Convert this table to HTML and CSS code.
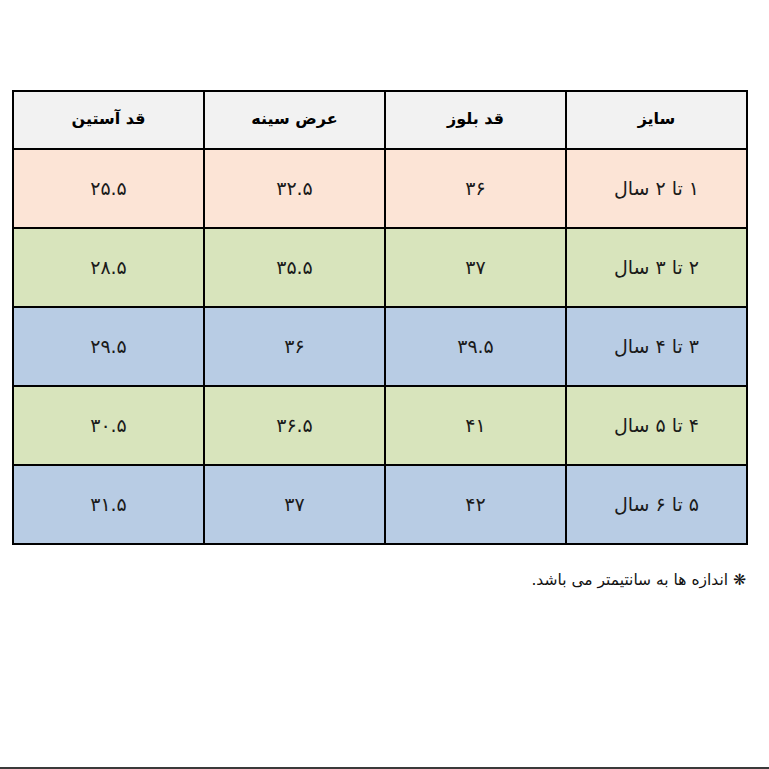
FILE: index.html
```html
<!DOCTYPE html>
<html lang="fa" dir="rtl">
<head>
<meta charset="utf-8">
<title>جدول سایز</title>
<link rel="stylesheet" href="styles.css">
</head>
<body>
<div class="page">
  <div class="content">
    <table class="sizes">
      <colgroup>
        <col class="c-narrow"><col class="c-narrow"><col class="c-narrow"><col class="c-wide">
      </colgroup>
      <thead>
        <tr class="head"><th>سایز</th><th>قد بلوز</th><th>عرض سینه</th><th>قد آستین</th></tr>
      </thead>
      <tbody>
        <tr class="peach"><td>۱ تا ۲ سال</td><td>۳۶</td><td>۳۲.۵</td><td>۲۵.۵</td></tr>
        <tr class="green"><td>۲ تا ۳ سال</td><td>۳۷</td><td>۳۵.۵</td><td>۲۸.۵</td></tr>
        <tr class="blue"><td>۳ تا ۴ سال</td><td>۳۹.۵</td><td>۳۶</td><td>۲۹.۵</td></tr>
        <tr class="green"><td>۴ تا ۵ سال</td><td>۴۱</td><td>۳۶.۵</td><td>۳۰.۵</td></tr>
        <tr class="blue"><td>۵ تا ۶ سال</td><td>۴۲</td><td>۳۷</td><td>۳۱.۵</td></tr>
      </tbody>
    </table>
    <p class="note">❋ اندازه ها به سانتیمتر می باشد.</p>
  </div>
  <div class="edge"></div>
</div>
</body>
</html>
```
FILE: styles.css
```css
html, body {
  margin: 0;
  padding: 0;
  background: #fff;
}
.page {
  box-sizing: border-box;
  height: 769px;
  display: flex;
  flex-direction: column;
  font-family: "DejaVu Sans", sans-serif;
  color: #111;
}
.content {
  padding: 90px 21px 0 15px;
}
.sizes {
  border-collapse: collapse;
  table-layout: fixed;
  width: 734px;
  border: 2px solid #000;
}
.c-narrow { width: 181px; }
.c-wide { width: 191px; }
.sizes th, .sizes td {
  border: 2px solid #000;
  text-align: center;
  vertical-align: middle;
  padding: 0;
}
.sizes th {
  height: 52px;
  font-size: 16px;
  font-weight: bold;
  color: #000;
  background: #f2f2f2;
  padding-bottom: 4px;
}
.sizes td {
  height: 75px;
  font-size: 19px;
  font-weight: normal;
  color: #1a1a1a;
  padding-bottom: 2px;
}
.peach td { background: #fce4d6; }
.green td { background: #d8e4bc; }
.blue td { background: #b8cce4; }
.note {
  margin: 26px 0 0 0;
  padding-right: 2px;
  font-size: 15.5px;
  color: #111;
}
.edge {
  margin-top: auto;
  height: 2px;
  background: #3a3a3a;
}
```
